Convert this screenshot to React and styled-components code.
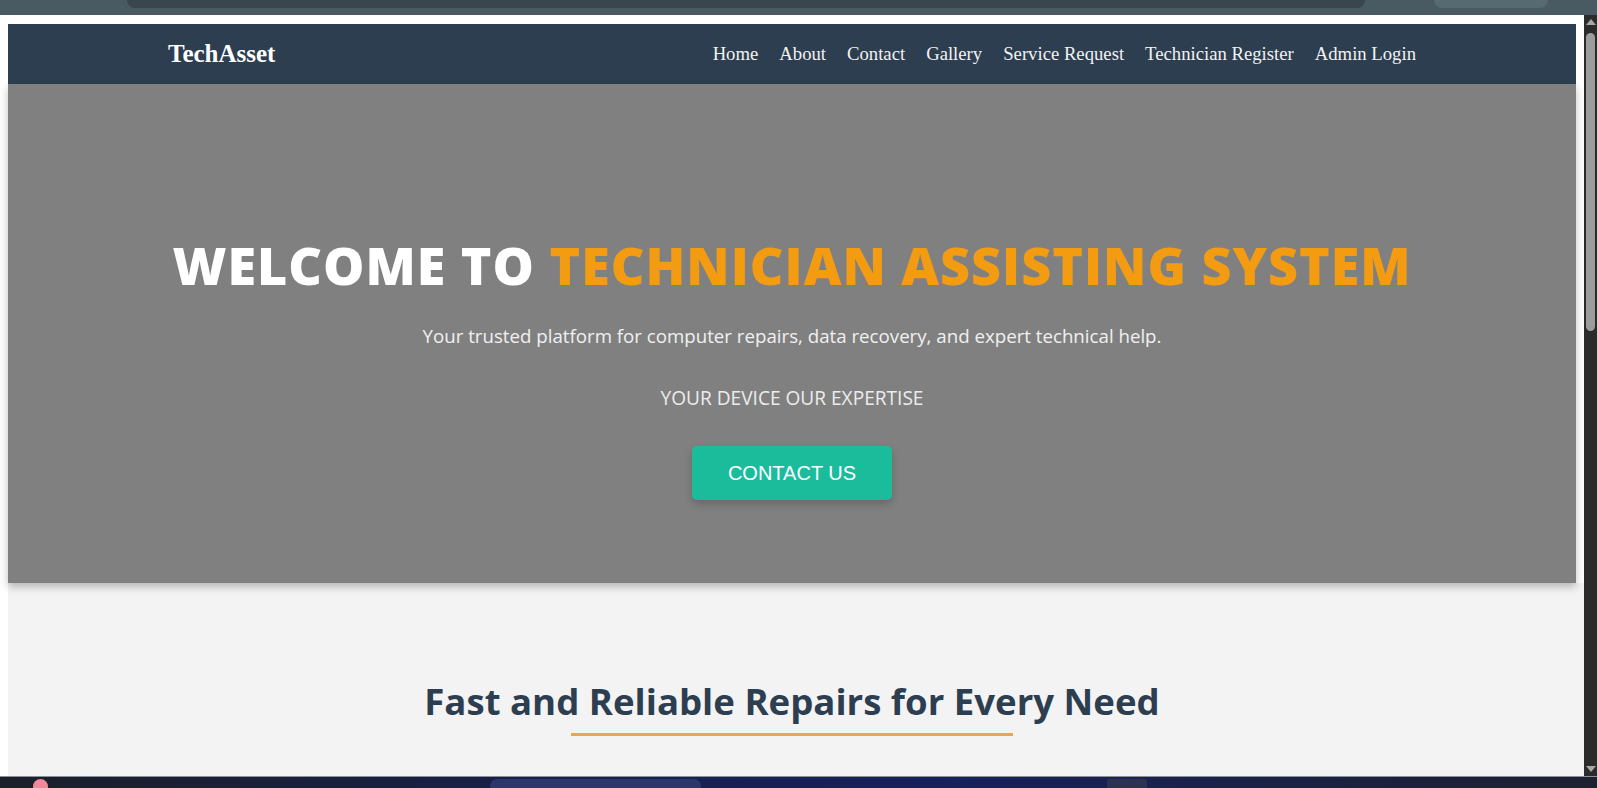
import styled, { createGlobalStyle } from 'styled-components';

const GlobalStyle = createGlobalStyle`
  html, body {
    margin: 0;
    padding: 0;
    overflow: hidden;
  }
`

const navLinks = ['Home', 'About', 'Contact', 'Gallery', 'Service Request', 'Technician Register', 'Admin Login'];

function App() {
  return (
    <Screen>
      <GlobalStyle />
      <BrowserBar>
        <AddressBar />
        <ProfilePill />
      </BrowserBar>
      <Middle>
        <Viewport>
          <Nav>
            <Brand>TechAsset</Brand>
            <NavList>
              {navLinks.map((l) => (
                <NavLink key={l} href="#">{l}</NavLink>
              ))}
            </NavList>
          </Nav>
          <Hero>
            <Title>
              WELCOME TO <Accent>TECHNICIAN ASSISTING SYSTEM</Accent>
            </Title>
            <Lead>
              Your trusted platform for computer repairs, data recovery, and expert technical help.
            </Lead>
            <Tagline>YOUR DEVICE OUR EXPERTISE</Tagline>
            <ContactButton>CONTACT US</ContactButton>
          </Hero>
          <Section>
            <SectionTitle>Fast and Reliable Repairs for Every Need</SectionTitle>
          </Section>
        </Viewport>
        <Scrollbar>
          <Arrow />
          <Thumb />
          <Spacer />
          <Arrow $down />
        </Scrollbar>
      </Middle>
      <Taskbar>
        <TrayIcon />
        <SearchPill />
        <AppTile />
      </Taskbar>
    </Screen>
  );
}

const Screen = styled.div`
  width: 1597px;
  height: 788px;
  display: flex;
  flex-direction: column;
  overflow: hidden;
`

const BrowserBar = styled.div`
  height: 15px;
  flex-shrink: 0;
  background: #4a5a63;
  display: flex;
  align-items: flex-start;
  padding-left: 127px;
  gap: 69px;
`

const AddressBar = styled.div`
  width: 1238px;
  height: 8px;
  background: #3a464d;
  border-radius: 0 0 12px 12px;
`

const ProfilePill = styled.div`
  width: 114px;
  height: 8px;
  background: #566a72;
  border-radius: 0 0 10px 10px;
`

const Middle = styled.div`
  flex: 1;
  display: flex;
  min-height: 0;
`

const Viewport = styled.div`
  flex: 1;
  background: #ffffff;
  padding: 9px 0 0 8px;
  overflow: hidden;
`

const Nav = styled.nav`
  height: 60px;
  margin-right: 8px;
  background: #2c3e50;
  display: flex;
  align-items: center;
  justify-content: space-between;
  padding: 0 160px;
  box-sizing: border-box;
`

const Brand = styled.div`
  font-family: "Liberation Serif", "Times New Roman", serif;
  font-weight: bold;
  font-size: 25px;
  color: #ffffff;
`

const NavList = styled.div`
  display: flex;
  gap: 21px;
`

const NavLink = styled.a`
  font-family: "Liberation Serif", "Times New Roman", serif;
  font-size: 18.7px;
  color: #f2f2f2;
  text-decoration: none;
`

const Hero = styled.header`
  position: relative;
  z-index: 1;
  height: 499px;
  margin-right: 8px;
  background: #808080;
  box-shadow: 0 4px 8px rgba(0, 0, 0, 0.25);
  display: flex;
  flex-direction: column;
  align-items: center;
  padding-top: 150px;
  box-sizing: border-box;
`

const Title = styled.h1`
  margin: 0;
  font-family: "Open Sans", sans-serif;
  font-weight: 800;
  font-size: 52px;
  line-height: 62px;
  letter-spacing: 1px;
  color: #ffffff;
  white-space: nowrap;
`

const Accent = styled.span`
  color: #f39c12;
`

const Lead = styled.p`
  margin: 26px 0 0;
  font-family: "Open Sans", sans-serif;
  font-size: 18.7px;
  line-height: 27px;
  color: #f0f0f0;
`

const Tagline = styled.p`
  margin: 36px 0 0;
  font-family: "Open Sans", sans-serif;
  font-size: 19.1px;
  line-height: 27px;
  color: #ececec;
`

const ContactButton = styled.button`
  margin-top: 34px;
  width: 200px;
  height: 54px;
  border: none;
  border-radius: 5px;
  background: #1abc9c;
  color: #ffffff;
  font-family: "Liberation Sans", Arial, sans-serif;
  font-size: 20px;
  box-shadow: 0 4px 8px rgba(0, 0, 0, 0.2);
`

const Section = styled.section`
  height: 400px;
  background: #f3f3f3;
  display: flex;
  flex-direction: column;
  align-items: center;
  padding: 96px 8px 0 0;
  box-sizing: border-box;
`

const SectionTitle = styled.h2`
  position: relative;
  margin: 0;
  font-family: "Open Sans", sans-serif;
  font-weight: 700;
  font-size: 36.6px;
  line-height: 44px;
  color: #2c3e50;

  &::after {
    content: '';
    position: absolute;
    left: 20%;
    width: 60%;
    bottom: -13px;
    height: 3px;
    background: #e9a844;
  }
`

const Scrollbar = styled.div`
  width: 13px;
  background: #2b2b2b;
  display: flex;
  flex-direction: column;
  align-items: center;
  padding: 4px 0;
  box-sizing: border-box;
`

const Arrow = styled.div`
  width: 0;
  height: 0;
  border-left: 5px solid transparent;
  border-right: 5px solid transparent;
  ${(p) => (p.$down
    ? 'border-top: 6px solid #a8a8a8;'
    : 'border-bottom: 6px solid #a8a8a8;')}
`

const Thumb = styled.div`
  margin-top: 8px;
  width: 9px;
  height: 298px;
  border-radius: 5px;
  background: #9c9c9c;
`

const Spacer = styled.div`
  flex: 1;
`

const Taskbar = styled.div`
  height: 12px;
  flex-shrink: 0;
  background: linear-gradient(90deg, #1b1f2a 0%, #16204f 40%, #17215a 60%, #1d2130 100%);
  border-top: 1px solid #8a8f98;
  display: flex;
  align-items: flex-start;
  padding: 2px 0 0 33px;
  box-sizing: border-box;
  overflow: hidden;
`

const TrayIcon = styled.div`
  width: 15px;
  height: 15px;
  border-radius: 50%;
  background: #f08a9a;
`

const SearchPill = styled.div`
  margin-left: 442px;
  width: 211px;
  height: 14px;
  border-radius: 7px;
  background: #2b366a;
`

const AppTile = styled.div`
  margin-left: 406px;
  width: 40px;
  height: 14px;
  border-radius: 3px;
  background: #2c3250;
`

export default App;
